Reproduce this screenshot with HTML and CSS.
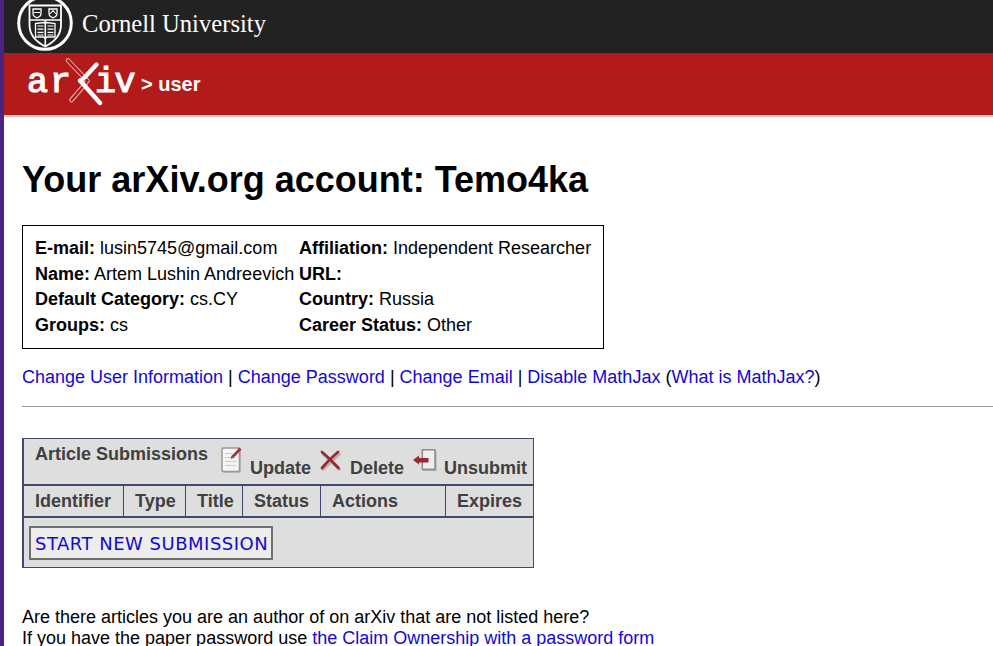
FILE: index.html
```html
<!DOCTYPE html>
<html lang="en">
<head>
<meta charset="utf-8">
<title>Your arXiv.org account</title>
<link rel="stylesheet" href="styles.css">
</head>
<body>
<header>
  <div class="cornell">
    <svg class="seal" width="57" height="53" viewBox="0 0 57 53" fill="none" stroke="#fff">
      <circle cx="28" cy="23" r="26.3" stroke-width="3"/>
      <path d="M12.5 5.5H44V25C44 36 37 42 28.3 46.5C19.500 42 12.500 36 12.500 25Z" stroke-width="1.8"/>
      <path d="M12.500 20H44M28.300 20V46" stroke-width="1.600"/>
      <path d="M16 9H24V13.500Q24 16.500 20 17.800Q16 16.500 16 13.500ZM32 9H40V13.500Q40 16.500 36 17.800Q32 16.500 32 13.500Z" stroke-width="1.300"/>
      <path d="M17 12.500H23M33 14L36 10.500L39 14" stroke-width="1.100"/>
      <path d="M18.500 23.500L27 22.500L28.300 23.500L29.600 22.500L38 23.500V37H30L28.300 38.500L26.500 37H18.500Z" stroke-width="1.300"/>
      <path d="M20.500 26H26.500M20.500 29.200H26.500M20.500 32.400H26.500M20.500 35H26.500M30.500 26H36.500M30.500 29.200H36.500M30.500 32.400H36.500M30.500 35H36.500" stroke-width="1.200"/>
    </svg>
    <svg class="wordmark" width="200" height="53" viewBox="0 0 200 53"><text x="0" y="32" textLength="184" lengthAdjust="spacingAndGlyphs">Cornell University</text></svg>
  </div>
  <div class="bar">
    <svg class="logo" width="116" height="62" viewBox="-4 0 116 62">
      <g class="mono"><text x="-1 22" y="38.500">ar</text><text x="67 86.500" y="38.500">iv</text></g>
      <g stroke-linecap="round" fill="none">
        <path d="M40 7.500L59.500 28M43.500 47L58 30" stroke="#f0b4b4" stroke-width="4.600"/>
        <path d="M40 7.500L59.500 28M43.500 47L58 30" stroke="#b31b1b" stroke-width="2.600"/>
        <path d="M68.500 11.500L57 24M52 27.500L72 50" stroke="#fff" stroke-width="4.400"/>
        <path d="M57 24L52 28" stroke="#fff" stroke-width="4"/>
      </g>
    </svg>
    <span class="crumb">&gt; user</span>
  </div>
</header>
<main>
  <h1>Your arXiv.org account: Temo4ka</h1>
  <section class="info">
    <div><b>E-mail:</b> lusin5745@gmail.com</div><div><b>Affiliation:</b> Independent Researcher</div>
    <div><b>Name:</b> Artem Lushin Andreevich</div><div><b>URL:</b></div>
    <div><b>Default Category:</b> cs.CY</div><div><b>Country:</b> Russia</div>
    <div><b>Groups:</b> cs</div><div><b>Career Status:</b> Other</div>
  </section>
  <p class="links"><a href="#">Change User Information</a> | <a href="#">Change Password</a> | <a href="#">Change Email</a> | <a href="#">Disable MathJax</a> (<a href="#">What is MathJax?</a>)</p>
  <hr>
  <section class="subs">
    <div class="tools">
      <span class="caption">Article Submissions</span>
      <svg class="i-update" width="22" height="28" viewBox="0 0 22 28">
        <rect x="1.500" y="1.500" width="18.500" height="24.500" rx="2" fill="#bbb"/>
        <rect x="1" y="1" width="17.500" height="23.500" rx="1.500" fill="#f4f4f4" stroke="#999" stroke-width="1.500"/>
        <path d="M4 6.500H11M4 10.500H13M4 14.500H15M4 18.500H15" stroke="#ccc" stroke-width="1.200"/>
        <path d="M11 10.500L19.500 1.500" stroke="#a83238" stroke-width="2.800"/><path d="M10 11.500L12 9.500" stroke="#666" stroke-width="1.500"/>
      </svg>
      <span class="t-update">Update</span>
      <svg class="i-delete" width="22" height="22" viewBox="0 0 22 22" fill="none" stroke-linecap="round">
        <path d="M3 4L19.500 19.500M19.500 4L3 19.500" stroke="#b4b4b4" stroke-width="3"/>
        <path d="M2 2C8 7 13 12 18.500 18M18 2C12 7 7 12 2 18" stroke="#952b2f" stroke-width="2.800"/>
      </svg>
      <span class="t-delete">Delete</span>
      <svg class="i-unsub" width="26" height="24" viewBox="0 0 26 24">
        <path d="M10 2H23.500V22H10Z" fill="#aaa"/>
        <rect x="9.300" y=".8" width="12.700" height="19.500" fill="#eee" stroke="#8c8c8c" stroke-width="1.500"/>
        <path d="M0 11L6 6.500V9H15.500V13.500H6V15.500Z" fill="#982b30"/>
      </svg>
      <span class="t-unsub">Unsubmit</span>
    </div>
    <div class="cols"><span>Identifier</span><span>Type</span><span>Title</span><span>Status</span><span>Actions</span><span>Expires</span></div>
    <div class="start"><a href="#">START NEW SUBMISSION</a></div>
  </section>
  <p class="claim">Are there articles you are an author of on arXiv that are not listed here?<br>If you have the paper password use <a href="#">the Claim Ownership with a password form</a></p>
</main>
</body>
</html>
```
FILE: styles.css
```css
* { box-sizing: border-box; }
body { margin: 0; height: 646px; overflow: hidden; border-left: 4px solid #4b247b; background: #fff; color: #000; font: 18px/21px "Liberation Sans", Arial, sans-serif; white-space: nowrap; }
a { color: #1408d0; text-decoration: none; }
svg { overflow: visible; }
.cornell { height: 53px; background: #222; display: flex; padding-left: 13px; }
.seal { flex: none; }
.wordmark { margin-left: 8px; }
.wordmark text { font: 26px "Liberation Serif", serif; fill: #fff; }
.bar { height: 64px; background: #b31b1b; border-bottom: 2px solid #dfc5c7; display: flex; padding-left: 20px; }
.logo { flex: none; }
.mono text { font: 35px "Liberation Mono", monospace; fill: #fff; stroke: #fff; stroke-width: 1.2px; }
.crumb { color: #fff; font-weight: bold; font-size: 20px; margin: 21px 0 0 1px; }
main { padding-left: 18px; }
h1 { margin: 42px 0 0; font-size: 36px; line-height: 42px; }
.info { width: 582px; height: 124px; margin-top: 24px; border: 1px solid #000; padding: 10px 12px; display: grid; grid-template-columns: 264px 1fr; grid-auto-rows: 25.6px; line-height: 25px; }
.links { margin: 17px 0 0; line-height: 22px; }
hr { margin: 18px 0 0; border: 0; height: 1px; background: #999; }
.subs { width: 512px; height: 130px; margin-top: 31px; border: 1px solid #404a70; border-left-width: 2px; background: #dedede; color: #404040; font-weight: bold; }
.tools { height: 47px; border-bottom: 2px solid #404a70; display: flex; align-items: flex-start; padding-left: 11px; }
.caption { width: 186px; padding-top: 5px; }
.tools svg { flex: none; }
.i-update { margin-top: 8px; }
.t-update { width: 70px; margin-left: 7px; padding-top: 19px; }
.i-delete { margin-top: 11px; }
.t-delete { width: 63px; margin-left: 8px; padding-top: 19px; }
.i-unsub { margin-top: 10px; }
.t-unsub { margin-left: 5px; padding-top: 19px; }
.cols { height: 32px; display: grid; grid-template-columns: 100px 62px 57px 78px 125px 1fr; border-bottom: 2px solid #404a70; line-height: 30px; }
.cols span { padding-left: 11px; border-right: 1px solid #404a70; }
.cols span:last-child { border: 0; }
.start { padding: 8px 5px; }
.start a { display: block; width: 244px; height: 34px; border: 2px solid #707070; background: #ededed; padding-left: 4px; font: 18px/31px "DejaVu Sans", Verdana, sans-serif; letter-spacing: .5px; }
.claim { margin: 39px 0 0; }
```
